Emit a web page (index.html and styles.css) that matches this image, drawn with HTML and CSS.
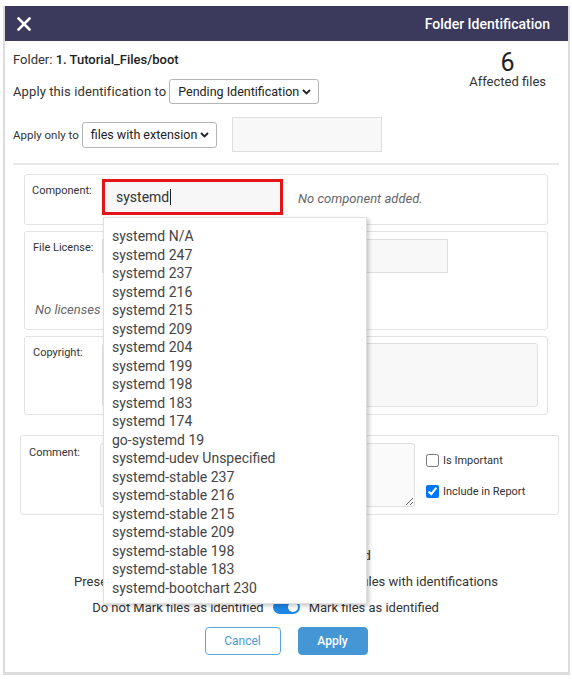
FILE: index.html
```html
<!DOCTYPE html>
<html>
<head>
<meta charset="utf-8">
<link rel="stylesheet" href="styles.css">
</head>
<body>
<div class="modal">
  <div class="header">
    <svg class="close" width="14" height="14" viewBox="0 0 14 14"><path d="M1.5 1.5 L12.5 12.5 M12.5 1.5 L1.5 12.5" stroke="#fff" stroke-width="2.6" stroke-linecap="square"/></svg>
    <span class="title">Folder Identification</span>
  </div>
  <div class="body">
    <div class="top">
      <div class="top-left">
        <div class="folder">Folder: <b>1. Tutorial_Files/boot</b></div>
        <div class="row row1">
          <span class="lbl1">Apply this identification to</span>
          <div class="select sel1"><span>Pending Identification</span><svg width="9" height="6" viewBox="0 0 9 6"><path d="M1 1 L4.5 4.5 L8 1" stroke="#222" stroke-width="1.8" fill="none"/></svg></div>
        </div>
        <div class="row row2">
          <span class="small">Apply only to</span>
          <div class="select sel2"><span>files with extension</span><svg width="9" height="6" viewBox="0 0 9 6"><path d="M1 1 L4.5 4.5 L8 1" stroke="#222" stroke-width="1.8" fill="none"/></svg></div>
          <div class="ext-input"></div>
        </div>
      </div>
      <div class="affected">
        <div class="num">6</div>
        <div class="aff-label">Affected files</div>
      </div>
    </div>
    <div class="divider"></div>

    <div class="box component">
      <span class="label">Component:</span>
      <div class="comp-wrap">
        <div class="comp-input">systemd<span class="caret"></span></div>
        <div class="dropdown">
          <div class="item">systemd N/A</div>
          <div class="item">systemd 247</div>
          <div class="item">systemd 237</div>
          <div class="item">systemd 216</div>
          <div class="item">systemd 215</div>
          <div class="item">systemd 209</div>
          <div class="item">systemd 204</div>
          <div class="item">systemd 199</div>
          <div class="item">systemd 198</div>
          <div class="item">systemd 183</div>
          <div class="item">systemd 174</div>
          <div class="item">go-systemd 19</div>
          <div class="item">systemd-udev Unspecified</div>
          <div class="item">systemd-stable 237</div>
          <div class="item">systemd-stable 216</div>
          <div class="item">systemd-stable 215</div>
          <div class="item">systemd-stable 209</div>
          <div class="item">systemd-stable 198</div>
          <div class="item">systemd-stable 183</div>
          <div class="item">systemd-bootchart 230</div>
        </div>
      </div>
      <span class="empty comp-empty">No component added.</span>
    </div>

    <div class="box license">
      <div class="lic-row">
        <span class="label">File License:</span>
        <div class="lic-input"></div>
      </div>
      <div class="empty lic-empty">No licenses added.</div>
    </div>

    <div class="box copyright">
      <span class="label">Copyright:</span>
      <div class="copy-area"></div>
    </div>

    <div class="box comment">
      <span class="label">Comment:</span>
      <textarea class="comment-area"></textarea>
      <div class="checks">
        <label class="check"><input type="checkbox"> Is Important</label>
        <label class="check"><input type="checkbox" checked> Include in Report</label>
      </div>
    </div>

    <div class="options">
      <div class="opt opt1">Skip files already identified</div>
      <div class="opt opt2"><span>Preserve existing identifications</span><span class="toggle"></span><span>Overwrite files with identifications</span></div>
      <div class="opt opt3"><span>Do not Mark files as identified</span><span class="toggle"></span><span>Mark files as identified</span></div>
    </div>

    <div class="buttons">
      <button class="btn cancel">Cancel</button>
      <button class="btn apply">Apply</button>
    </div>
  </div>
</div>
</body>
</html>
```

FILE: styles.css
```css
* { box-sizing: border-box; }
body {
  margin: 0;
  background: #fff;
  font-family: Roboto, "Liberation Sans", sans-serif;
  color: #333;
}
.modal {
  margin: 6px 2px 0 3px;
  height: 669px;
  border: 2px solid #dcdcdc;
  border-top: 0;
  border-bottom-width: 3px;
  background: #fff;
}
.header {
  height: 35px;
  background: #3b3a5c;
  display: flex;
  align-items: center;
  justify-content: space-between;
  padding: 0 18px 0 12px;
}
.close { display: block; }
.title {
  color: #fff;
  font-size: 14px;
  font-weight: 500;
}
.body {
  padding: 10px 9px 0 8px;
}
.top {
  display: flex;
  justify-content: space-between;
}
.folder {
  font-size: 13px;
  line-height: 18px;
  color: #333;
}
.folder b { font-weight: 500; color: #222; }
.row {
  display: flex;
  align-items: center;
  font-size: 13px;
  color: #333;
  white-space: nowrap;
}
.row1 { margin-top: 10px; gap: 3px; }
.lbl1 { letter-spacing: 0.1px; }
.row2 { margin-top: 13px; }
.small { font-size: 11.5px; margin-right: 3px; }
.select {
  display: flex;
  align-items: center;
  justify-content: space-between;
  border: 1px solid #b5b5b5;
  border-radius: 3px;
  background: #fff;
  color: #222;
  font-size: 12.5px;
  white-space: nowrap;
  padding: 0 7px 0 8px;
}
.sel1 { width: 150px; height: 25px; }
.sel2 { width: 135px; height: 26px; }
.ext-input {
  width: 150px;
  height: 35px;
  margin-left: 15px;
  background: #f8f8f8;
  border: 1px solid #dedede;
}
.affected {
  text-align: center;
  margin-right: 13px;
  padding-top: 1px;
  color: #333;
}
.num {
  font-size: 25px;
  line-height: 22px;
  color: #222;
}
.aff-label {
  font-size: 13px;
  line-height: 16px;
}
.divider {
  height: 2px;
  background: #e8e8e8;
  margin-top: 11px;
}
.box {
  border: 1px solid #e3e3e3;
  border-radius: 3px;
  margin: 0 11px;
  background: #fff;
}
.label {
  font-size: 11px;
  color: #333;
  line-height: 14px;
}
.component {
  margin-top: 9px;
  height: 51px;
  display: flex;
  align-items: flex-start;
  padding: 4px 0 0 7px;
}
.component .label { width: 70px; margin-top: 5px; }
.comp-wrap { position: relative; }
.comp-input {
  width: 181px;
  height: 36px;
  border: 3px solid #e4141b;
  background: #f7f7f7;
  font-size: 14px;
  color: #333;
  padding-left: 11px;
  display: flex;
  align-items: center;
}
.caret {
  display: inline-block;
  width: 1px;
  height: 16px;
  background: #222;
  margin-left: 1px;
}
.empty {
  font-style: italic;
  color: #666;
  font-size: 13px;
}
.comp-empty { margin: 12px 0 0 15px; }
.dropdown {
  position: absolute;
  z-index: 10;
  left: 1px;
  top: 38px;
  width: 264px;
  height: 387px;
  background: #fff;
  border: 1px solid #e0e0e0;
  box-shadow: 2px 2px 4px rgba(0,0,0,0.22);
  padding: 9px 0 0 8px;
}
.item {
  font-size: 14px;
  line-height: 18.5px;
  color: #444;
}
.license {
  margin-top: 6px;
  height: 99px;
  padding: 7px 0 0 8px;
}
.lic-row { display: flex; align-items: flex-start; }
.lic-row .label { width: 69px; margin-top: 2px; }
.lic-input {
  width: 346px;
  height: 34px;
  background: #f8f8f8;
  border: 1px solid #dedede;
}
.lic-empty { margin: 29px 0 0 2px; line-height: 16px; }
.copyright {
  margin-top: 6px;
  height: 79px;
  display: flex;
  align-items: flex-start;
  padding: 6px 0 0 8px;
}
.copyright .label { width: 69px; margin-top: 3px; }
.copy-area {
  width: 436px;
  height: 64px;
  background: #f8f8f8;
  border: 1px solid #e0e0e0;
  border-radius: 3px;
}
.comment {
  margin: 20px 0 0 7px;
  height: 80px;
  display: flex;
  align-items: flex-start;
  padding: 7px 0 0 8px;
}
.comment .label { width: 71px; margin-top: 3px; }
.comment-area {
  width: 315px;
  height: 64px;
  background: #fafafa;
  border: 1px solid #e0e0e0;
  border-radius: 3px;
  margin: 0;
  resize: both;
  font-family: inherit;
}
.checks {
  margin-left: 11px;
  padding-top: 11px;
  display: flex;
  flex-direction: column;
  gap: 18px;
}
.check {
  display: flex;
  align-items: center;
  font-size: 11px;
  color: #333;
  gap: 4px;
}
.check input { margin: 0; width: 13px; height: 13px; }
.options {
  margin-top: 27px;
  font-size: 13px;
  color: #333;
}
.opt {
  height: 26px;
  display: flex;
  align-items: center;
  justify-content: center;
  white-space: nowrap;
}
.opt1 { padding-left: 16px; }
.toggle {
  display: inline-block;
  position: relative;
  width: 27px;
  height: 14px;
  border-radius: 7px;
  background: #1f86e4;
  margin: 0 9px;
}
.toggle::after {
  content: "";
  position: absolute;
  right: 2px;
  top: 2px;
  width: 10px;
  height: 10px;
  border-radius: 50%;
  background: #fff;
}
.opt3 { padding-right: 41px; }
.buttons {
  margin-top: 7px;
  display: flex;
  justify-content: center;
  gap: 17px;
}
.btn {
  height: 28px;
  font-family: inherit;
  font-size: 12px;
  border-radius: 4px;
  padding: 0;
}
.cancel {
  width: 76px;
  background: #fff;
  border: 1px solid #5aa5dd;
  color: #4a9ad4;
}
.apply {
  width: 70px;
  background: #4596d4;
  border: 1px solid #4596d4;
  color: #fff;
  font-weight: 500;
}
```
